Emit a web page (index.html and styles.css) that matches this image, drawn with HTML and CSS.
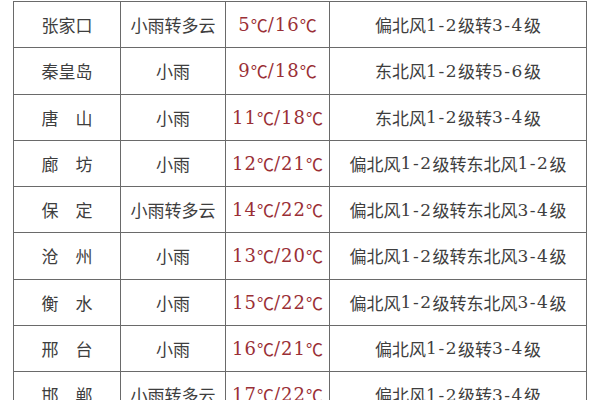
FILE: index.html
```html
<!DOCTYPE html>
<html lang="zh">
<head>
<meta charset="utf-8">
<link rel="stylesheet" href="styles.css">
</head>
<body>
<div class="table">
  <div class="cell">张家口</div><div class="cell">小雨转多云</div><div class="cell temp"><span class="n">5</span><span class="c">℃</span><span class="n">/16</span><span class="c">℃</span></div><div class="cell">偏北风<span class="n">1-2</span>级转<span class="n">3-4</span>级</div>
  <div class="cell">秦皇岛</div><div class="cell">小雨</div><div class="cell temp"><span class="n">9</span><span class="c">℃</span><span class="n">/18</span><span class="c">℃</span></div><div class="cell">东北风<span class="n">1-2</span>级转<span class="n">5-6</span>级</div>
  <div class="cell">唐　山</div><div class="cell">小雨</div><div class="cell temp"><span class="n">11</span><span class="c">℃</span><span class="n">/18</span><span class="c">℃</span></div><div class="cell">东北风<span class="n">1-2</span>级转<span class="n">3-4</span>级</div>
  <div class="cell">廊　坊</div><div class="cell">小雨</div><div class="cell temp"><span class="n">12</span><span class="c">℃</span><span class="n">/21</span><span class="c">℃</span></div><div class="cell">偏北风<span class="n">1-2</span>级转东北风<span class="n">1-2</span>级</div>
  <div class="cell">保　定</div><div class="cell">小雨转多云</div><div class="cell temp"><span class="n">14</span><span class="c">℃</span><span class="n">/22</span><span class="c">℃</span></div><div class="cell">偏北风<span class="n">1-2</span>级转东北风<span class="n">3-4</span>级</div>
  <div class="cell">沧　州</div><div class="cell">小雨</div><div class="cell temp"><span class="n">13</span><span class="c">℃</span><span class="n">/20</span><span class="c">℃</span></div><div class="cell">偏北风<span class="n">1-2</span>级转东北风<span class="n">3-4</span>级</div>
  <div class="cell">衡　水</div><div class="cell">小雨</div><div class="cell temp"><span class="n">15</span><span class="c">℃</span><span class="n">/22</span><span class="c">℃</span></div><div class="cell">偏北风<span class="n">1-2</span>级转东北风<span class="n">3-4</span>级</div>
  <div class="cell">邢　台</div><div class="cell">小雨</div><div class="cell temp"><span class="n">16</span><span class="c">℃</span><span class="n">/21</span><span class="c">℃</span></div><div class="cell">偏北风<span class="n">1-2</span>级转<span class="n">3-4</span>级</div>
  <div class="cell">邯　郸</div><div class="cell">小雨转多云</div><div class="cell temp"><span class="n">17</span><span class="c">℃</span><span class="n">/22</span><span class="c">℃</span></div><div class="cell">偏北风<span class="n">1-2</span>级转<span class="n">3-4</span>级</div>
</div>
</body>
</html>
```
FILE: styles.css
```css
html, body {
  margin: 0;
  padding: 0;
  background: #ffffff;
  overflow: hidden;
}
.table {
  margin: 1px 0 0 13px;
  display: grid;
  grid-template-columns: 107px 105px 104px 257px;
  grid-auto-rows: 46.25px;
  width: max-content;
  border-top: 1.5px solid #6a6a6a;
  border-left: 1.5px solid #6a6a6a;
}
.cell {
  box-sizing: border-box;
  border-right: 1.5px solid #6a6a6a;
  border-bottom: 1.5px solid #6a6a6a;
  display: flex;
  align-items: center;
  justify-content: center;
  font-family: "Noto Sans CJK SC", sans-serif;
  font-size: 17px;
  color: #3e3e3e;
  white-space: nowrap;
}
.n {
  font-family: "DejaVu Serif", "Liberation Serif", serif;
  font-size: 17px;
  letter-spacing: 1.5px;
}
.temp {
  color: #9a2f36;
}
.temp .n {
  font-size: 18px;
  letter-spacing: 1px;
}
.c {
  font-family: "Noto Sans CJK SC", sans-serif;
  font-size: 17px;
}
```
